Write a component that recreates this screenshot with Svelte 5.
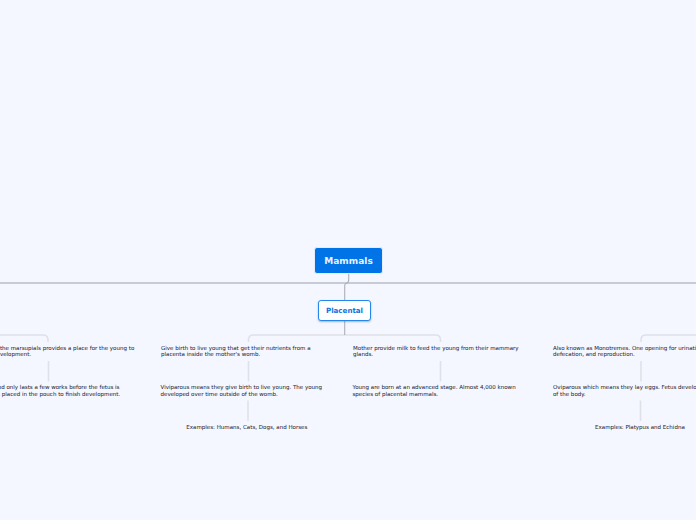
<script>
  const notes = [
    { x: -7, y: 345, lh: 6.3, t: 'In the marsupials provides a place for the young to', b: 'development.' },
    { x: -12.5, y: 384.2, lh: 7, t: 'Period only lasts a few works before the fetus is', b: 'then placed in the pouch to finish development.' },
    { x: 161, y: 345, lh: 6.3, t: 'Give birth to live young that get their nutrients from a', b: "placenta inside the mother's womb." },
    { x: 160.5, y: 384.2, lh: 7, t: 'Viviparous means they give birth to live young. The young', b: 'developed over time outside of the womb.' },
    { x: 353, y: 345, lh: 6.3, t: 'Mother provide milk to feed the young from their mammary', b: 'glands.' },
    { x: 352.5, y: 384.2, lh: 7, t: 'Young are born at an advanced stage. Almost 4,000 known', b: 'species of placental mammals.' },
    { x: 553, y: 345, lh: 6.3, t: 'Also known as Monotremes. One opening for urination,', b: 'defecation, and reproduction.' },
    { x: 553, y: 384.2, lh: 7, t: 'Oviparous which means they lay eggs. Fetus develops outside', b: 'of the body.' },
    { x: 186.3, y: 424, lh: 6.3, t: 'Examples: Humans, Cats, Dogs, and Horses', b: '' },
    { x: 595, y: 424, lh: 6.3, t: 'Examples: Platypus and Echidna', b: '' }
  ];
  const links = [
    'M48.5 361V381.5', 'M248.5 361V381.5', 'M248 400.5V421', 'M440.5 361V381.5', 'M641 361V381.5', 'M640.5 400.5V421',
    'M-5 335H43Q48 335 48 340V342',
    'M248.5 342V340Q248.5 335 253.5 335H435.5Q440.5 335 440.5 340V342',
    'M641 342V340Q641 335 646 335H701'
  ];
</script>

<div class="map">
  <svg class="wires" width="696" height="520" viewBox="0 0 696 520" aria-hidden="true">
    <path class="main" d="M0 283H696" />
    {#each links as d}
      <path class="soft" {d} />
    {/each}
    <path class="stem" d="M348.7 274V280Q348.7 283 345.8 283.6Q344.7 284 344.7 286V300" />
    <path class="stem" d="M344.7 321V335" />
  </svg>

  <div class="root">Mammals</div>
  <div class="branch">Placental</div>

  {#each notes as n}
    <p class="note" style="left:{n.x}px;top:{n.y}px;line-height:{n.lh}px">{n.t}{#if n.b}<br />{n.b}{/if}</p>
  {/each}
</div>

<style>
  :global(body) {
    margin: 0;
    background: #f4f7ff;
  }
  .map {
    position: relative;
    width: 696px;
    height: 520px;
    overflow: hidden;
    background: #f4f7ff;
    font-family: "DejaVu Sans", sans-serif;
  }
  .wires {
    position: absolute;
    inset: 0;
    fill: none;
  }
  .main {
    stroke: #c9cbd4;
    stroke-width: 2;
  }
  .soft {
    stroke: #e0e1e8;
    stroke-width: 1.6;
  }
  .stem {
    stroke: #aeb0b6;
    stroke-width: 1.1;
  }
  .root {
    position: absolute;
    left: 314px;
    top: 247px;
    box-sizing: border-box;
    width: 69px;
    height: 27px;
    display: flex;
    align-items: center;
    justify-content: center;
    background: #0073e6;
    border: 1px solid #e3edfb;
    border-radius: 3px;
    color: #e8f2ff;
    font-size: 9px;
    font-weight: 700;
    letter-spacing: 0.05px;
  }
  .branch {
    position: absolute;
    left: 318px;
    top: 300px;
    box-sizing: border-box;
    width: 53px;
    height: 21px;
    display: flex;
    align-items: center;
    justify-content: center;
    background: #fff;
    border: 1.6px solid #2288ea;
    border-radius: 3px;
    box-shadow: 0 1px 2px rgba(40, 60, 110, 0.35);
    color: #0a74e2;
    font-size: 7.1px;
    font-weight: 700;
  }
  .note {
    position: absolute;
    margin: 0;
    white-space: nowrap;
    color: #34343e;
    font-size: 5.53px;
    text-shadow: 0 0 0.3px rgba(44, 44, 54, 0.25);
  }
</style>
